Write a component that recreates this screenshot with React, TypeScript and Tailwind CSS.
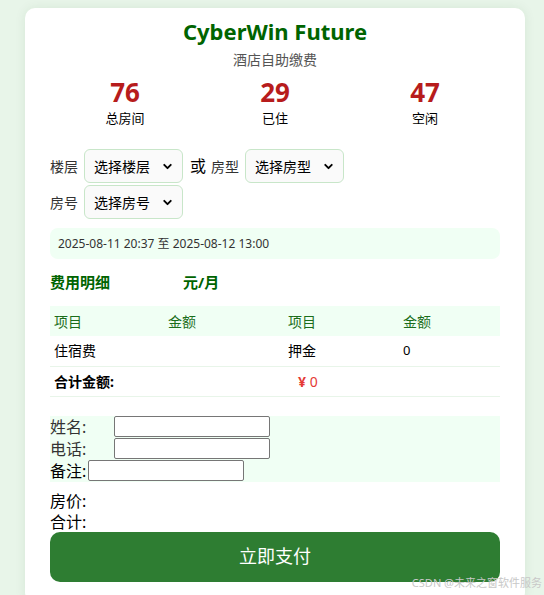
import { ChevronDown } from 'lucide-react';

const font = { fontFamily: '"Noto Sans", "Noto Sans CJK SC", sans-serif' };

function Select({ label }: { label: string }) {
  return (
    <div className="relative w-[99px] h-[34px]">
      <select className="appearance-none w-full h-full pl-[9px] pr-[24px] text-[14px] text-black bg-[#fafafa] border border-[#c8e6c9] rounded-[6px] outline-none">
        <option>{label}</option>
      </select>
      <ChevronDown
        size={13}
        strokeWidth={3.5}
        className="absolute right-[9px] top-[11px] text-black pointer-events-none"
      />
    </div>
  );
}

export default function App() {
  return (
    <div className="h-[595px] overflow-hidden bg-[#e8f5e9] pt-[8px] relative" style={font}>
      <div className="ml-[25px] w-[500px] bg-white rounded-[10px] shadow-[0_0_12px_rgba(0,80,0,0.08)] px-[25px] pt-[8px] pb-[20px]">
        {/* Header */}
        <h1 className="text-center text-[22px] leading-[30px] font-bold text-[#006400]">CyberWin Future</h1>
        <p className="text-center text-[14px] leading-[20px] mt-[4px] text-[#555]">酒店自助缴费</p>

        {/* Stats */}
        <div className="grid grid-cols-3 mt-[7px] text-center">
          {[
            ['76', '总房间'],
            ['29', '已住'],
            ['47', '空闲'],
          ].map(([n, l]) => (
            <div key={l}>
              <div className="text-[26px] leading-[30px] font-bold text-[#b71c1c]">{n}</div>
              <div className="text-[13px] leading-[18px] mt-[2px] text-black">{l}</div>
            </div>
          ))}
        </div>

        {/* Room selection */}
        <div className="flex flex-wrap items-center gap-y-[1px] mt-[22px] text-[14px] text-[#333]">
          <span className="mr-[6px]">楼层</span>
          <Select label="选择楼层" />
          <span className="ml-[7px] mr-[5px] text-[16px] text-black">或</span>
          <span className="mr-[6px]">房型</span>
          <Select label="选择房型" />
          <div className="basis-full h-0" />
          <span className="mr-[6px]">房号</span>
          <Select label="选择房号" />
        </div>

        {/* Date */}
        <div className="mt-[9px] h-[31px] flex items-center px-[8px] bg-[#f0fff4] rounded-[8px] text-[12px] text-[#333]">
          2025-08-11 20:37 至 2025-08-12 13:00
        </div>

        {/* Fee detail */}
        <div className="mt-[12px] flex text-[15px] leading-[22px] font-bold text-[#006400]">
          <span className="w-[133px]">费用明细</span>
          <span>元/月</span>
        </div>

        <table className="mt-[13px] w-full text-[14px] border-collapse">
          <colgroup>
            <col className="w-[114px]" />
            <col className="w-[120px]" />
            <col className="w-[115px]" />
            <col />
          </colgroup>
          <thead>
            <tr className="bg-[#f0fff4] text-[#1b6e1b] h-[30px]">
              <th className="text-left font-normal pl-[4px]">项目</th>
              <th className="text-left font-normal pl-[4px]">金额</th>
              <th className="text-left font-normal pl-[4px]">项目</th>
              <th className="text-left font-normal pl-[4px]">金额</th>
            </tr>
          </thead>
          <tbody>
            <tr className="h-[30px] border-b border-[#e8f5e9] text-black">
              <td className="pl-[4px]">住宿费</td>
              <td className="pl-[4px]"></td>
              <td className="pl-[4px]">押金</td>
              <td className="pl-[4px] text-[13px]">0</td>
            </tr>
            <tr className="h-[30px] border-b border-[#e8f5e9] text-black">
              <td className="pl-[4px] font-bold" colSpan={2}>合计金额:</td>
              <td className="pl-[14px] text-[#e53935]" colSpan={2}>
                <span className="font-bold">¥</span> 0
              </td>
            </tr>
          </tbody>
        </table>

        {/* Guest form */}
        <div className="mt-[19px] bg-[#f0fff4] text-[16px] leading-[22px]">
          <div className="flex items-center h-[22px]">
            <span className="w-[64px] text-[#333]">姓名:</span>
            <input className="w-[156px] h-[21px] border border-[#767676] rounded-[2px] bg-white" />
          </div>
          <div className="flex items-center h-[22px]">
            <span className="w-[64px] text-[#333]">电话:</span>
            <input className="w-[156px] h-[21px] border border-[#767676] rounded-[2px] bg-white" />
          </div>
          <div className="flex items-center h-[22px]">
            <span className="text-black">备注:</span>
            <input className="ml-[2px] w-[156px] h-[21px] border border-[#767676] rounded-[2px] bg-white" />
          </div>
        </div>

        <div className="mt-[9px] text-[16px] leading-[21px] text-black">
          <div>房价:</div>
          <div>合计:</div>
        </div>

        <button className="mt-[-1px] w-full h-[50px] rounded-[10px] bg-[#2e7d32] text-white text-[18px]">
          立即支付
        </button>
      </div>

      <div className="absolute right-[2px] bottom-[5px] text-[11px] leading-[14px] text-[#c8c8c8]">
        CSDN @未来之窗软件服务
      </div>
    </div>
  );
}
